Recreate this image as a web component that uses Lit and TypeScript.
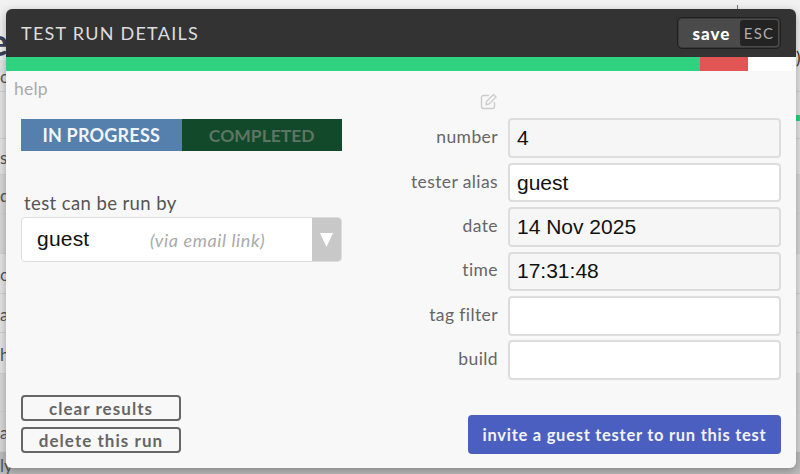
import { LitElement, html, css } from "lit";
import { customElement } from "lit/decorators.js";

interface Field {
  label: string;
  value: string;
  readonly?: boolean;
}

const FIELDS: Field[] = [
  { label: "number", value: "4", readonly: true },
  { label: "tester alias", value: "guest" },
  { label: "date", value: "14 Nov 2025", readonly: true },
  { label: "time", value: "17:31:48", readonly: true },
  { label: "tag filter", value: "" },
  { label: "build", value: "" },
];

// rows of the page behind the dialog, only their edges show
const ROWS = [
  { h: 60, text: "e", cls: "title" },
  { h: 32, text: "o", cls: "" },
  { h: 47, text: "", cls: "" },
  { h: 36, text: "s", cls: "" },
  { h: 39, text: "d", cls: "dark" },
  { h: 40, text: "", cls: "dark" },
  { h: 40, text: "o", cls: "" },
  { h: 39, text: "a", cls: "" },
  { h: 41, text: "h", cls: "" },
  { h: 38, text: "", cls: "dark" },
  { h: 40, text: "a", cls: "dark" },
  { h: 22, text: "ly", cls: "low" },
];

@customElement("app-root")
export class AppRoot extends LitElement {
  static styles = css`
    :host {
      display: block;
      position: relative;
      width: 800px;
      height: 474px;
      overflow: hidden;
      background: #e4e4e4;
      font-family: Lato, "Open Sans", sans-serif;
    }

    .page {
      display: flex;
      flex-direction: column;
    }

    .row {
      display: flex;
      align-items: center;
      padding-top: 2px;
      box-sizing: border-box;
      border-bottom: 1px solid #d2d2d2;
      font-size: 17px;
      color: #555;
      line-height: 1;
    }

    .row.title {
      font-size: 38px;
      font-weight: 700;
      color: #39435a;
      padding-top: 22px;
      text-indent: -12px;
      background: #f1f1f1;
      border-bottom: 0;
    }

    .row.dark {
      background: #d8d8d8;
    }

    .row.low {
      background: #bdbdbd;
      align-items: flex-end;
      padding: 0;
      border: 0;
    }

    .tick {
      position: absolute;
      left: 737px;
      top: 5px;
      width: 1px;
      height: 5px;
      background: #777;
    }

    .paren {
      position: absolute;
      left: 796px;
      top: 48px;
      font-size: 17px;
      line-height: 20px;
      color: #333;
    }

    .mark {
      position: absolute;
      left: 796px;
      top: 115px;
      width: 4px;
      height: 6px;
      background: #2fd27f;
    }

    .modal {
      position: absolute;
      left: 6px;
      top: 9px;
      width: 790px;
      height: 459px;
      display: flex;
      flex-direction: column;
      background: #f8f8f8;
      border-radius: 6px;
      overflow: hidden;
      box-shadow: 0 3px 10px rgba(0, 0, 0, 0.3);
    }

    .header {
      flex: none;
      height: 48px;
      display: flex;
      align-items: center;
      justify-content: space-between;
      padding: 0 15px;
      background: #333;
    }

    .header h1 {
      margin: 0;
      font-size: 18px;
      font-weight: 400;
      letter-spacing: 1.25px;
      color: #ddd;
    }

    .save {
      display: flex;
      align-items: stretch;
      box-sizing: border-box;
      width: 104px;
      height: 32px;
      padding: 2px;
      border: 1px solid #1f1f1f;
      border-radius: 5px;
      background: #4a4a4a;
      box-shadow: inset 0 0 0 1px #3a3a3a;
    }

    .save b {
      flex: 1;
      display: flex;
      align-items: center;
      justify-content: center;
      padding-left: 3px;
      font-size: 17px;
      font-weight: 900;
      letter-spacing: 1px;
      color: #fff;
    }

    .save span {
      flex: none;
      width: 38px;
      display: flex;
      align-items: center;
      justify-content: center;
      border-radius: 3px;
      background: #232323;
      font-size: 15px;
      letter-spacing: 1.2px;
      color: #aaa;
    }

    .progress {
      flex: none;
      height: 14px;
      display: flex;
      background: #fff;
    }

    .progress .pass {
      width: 694px;
      background: #2fd27f;
    }

    .progress .fail {
      width: 48px;
      background: #e25555;
    }

    .body {
      flex: 1;
      min-height: 0;
      display: flex;
      justify-content: space-between;
      padding: 8px 15px 14px;
    }

    .left {
      width: 321px;
      display: flex;
      flex-direction: column;
    }

    .help {
      margin-left: -7px;
      font-size: 17.5px;
      line-height: 20px;
      letter-spacing: 0.2px;
      color: #aaa;
    }

    .toggle {
      display: flex;
      height: 32px;
      margin-top: 20px;
      font-weight: 700;
    }

    .toggle div {
      flex: 1;
      display: flex;
      align-items: center;
      justify-content: center;
    }

    .toggle .on {
      background: #5580ae;
      font-size: 18px;
      letter-spacing: 0.2px;
      color: #f2f5f8;
    }

    .toggle .off {
      background: #12492a;
      font-size: 17.5px;
      color: #5d7564;
    }

    .run-label {
      margin: 42px 0 3px 3px;
      font-size: 18.5px;
      line-height: 21px;
      letter-spacing: 0.4px;
      color: #555;
    }

    .select {
      height: 45px;
      box-sizing: border-box;
      display: flex;
      align-items: center;
      border: 1px solid #ddd;
      border-radius: 4px;
      background: #fff;
      overflow: hidden;
    }

    .select .name {
      width: 113px;
      padding-left: 15px;
      margin-top: -2px;
      font-family: "Liberation Sans", Arial, sans-serif;
      font-size: 21px;
      letter-spacing: 0.2px;
      color: #111;
    }

    .select em {
      flex: 1;
      font-size: 18px;
      letter-spacing: 0.6px;
      color: #aaa;
    }

    .select .arrow {
      flex: none;
      width: 29px;
      align-self: stretch;
      display: flex;
      align-items: center;
      justify-content: center;
      background: #c8c8c8;
    }

    .actions {
      margin-top: auto;
      margin-bottom: 1px;
      display: flex;
      flex-direction: column;
      gap: 6px;
      width: 160px;
    }

    .actions button {
      height: 26px;
      box-sizing: border-box;
      padding: 0;
      border: 2px solid #666;
      border-radius: 4px;
      background: transparent;
      font-family: inherit;
      font-size: 17px;
      font-weight: 700;
      letter-spacing: 1.05px;
      color: #666;
    }

    .right {
      display: flex;
      flex-direction: column;
      align-items: flex-end;
    }

    .fields {
      display: grid;
      grid-template-columns: auto 273px;
      grid-template-rows: 34.6px;
      grid-auto-rows: 39.6px;
      column-gap: 10px;
      row-gap: 4.8px;
      align-items: center;
    }

    .edit {
      grid-column: 1;
      justify-self: end;
      align-self: end;
      height: 18px;
      margin-bottom: 4px;
    }

    .spacer {
      grid-column: 2;
    }

    label {
      justify-self: end;
      font-size: 17.5px;
      letter-spacing: 0.4px;
      color: #666;
      margin-top: -3px;
    }

    input {
      width: 100%;
      height: 100%;
      box-sizing: border-box;
      padding: 0 7px;
      border: 2px solid #ddd;
      border-radius: 4px;
      background: #fff;
      font-family: "Liberation Sans", Arial, sans-serif;
      font-size: 21px;
      color: #111;
      outline: none;
    }

    input[readonly] {
      background: #f6f6f6;
    }

    .invite {
      margin-top: auto;
      width: 313px;
      height: 39px;
      border: 0;
      border-radius: 4px;
      background: #4b5fc0;
      font-family: inherit;
      font-size: 16.5px;
      font-weight: 700;
      letter-spacing: 0.73px;
      color: #f2f3fb;
    }
  `;

  render() {
    return html`
      <div class="page">
        ${ROWS.map(
          (r) =>
            html`<div class="row ${r.cls}" style="height:${r.h}px">${r.text}</div>`,
        )}
      </div>
      <div class="tick"></div>
      <div class="paren">)</div>
      <div class="mark"></div>
      <div class="modal">
        <div class="header">
          <h1>TEST RUN DETAILS</h1>
          <div class="save"><b>save</b><span>ESC</span></div>
        </div>
        <div class="progress">
          <div class="pass"></div>
          <div class="fail"></div>
        </div>
        <div class="body">
          <div class="left">
            <div class="help">help</div>
            <div class="toggle">
              <div class="on">IN PROGRESS</div>
              <div class="off">COMPLETED</div>
            </div>
            <div class="run-label">test can be run by</div>
            <div class="select">
              <span class="name">guest</span>
              <em>(via email link)</em>
              <span class="arrow">
                <svg width="13" height="14" viewBox="0 0 13 14">
                  <path d="M0 0h13L6.5 14z" fill="#fff" />
                </svg>
              </span>
            </div>
            <div class="actions">
              <button>clear results</button>
              <button>delete this run</button>
            </div>
          </div>
          <div class="right">
            <div class="fields">
              <svg class="edit" width="18" height="18" viewBox="0 0 18 18" fill="none" stroke="#ccc" stroke-width="1.4" stroke-linejoin="round">
                <path d="M9 3.5H3.5a2 2 0 0 0-2 2v9a2 2 0 0 0 2 2h9a2 2 0 0 0 2-2V10" />
                <path d="M6.5 9.5 13.5 2.5l2.5 2.5-7 7-3 .6z" />
              </svg>
              <div class="spacer"></div>
              ${FIELDS.map(
                (f) => html`
                  <label>${f.label}</label>
                  <input .value=${f.value} ?readonly=${f.readonly} />
                `,
              )}
            </div>
            <button class="invite">invite a guest tester to run this test</button>
          </div>
        </div>
      </div>
    `;
  }
}
